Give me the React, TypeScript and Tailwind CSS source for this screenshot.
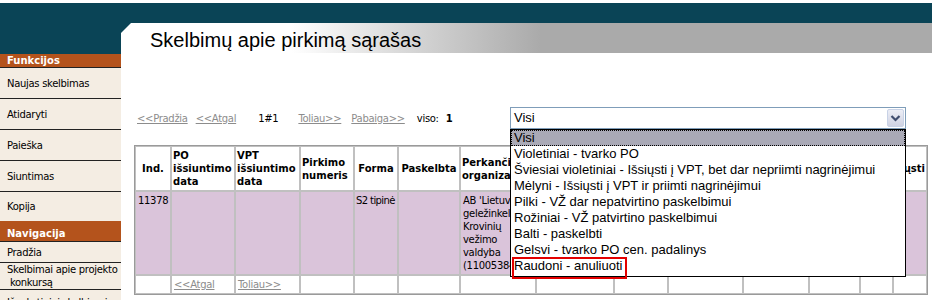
import React from "react";

function Sidebar() {
  const item = "h-[31px] border-b border-[#222] pl-[7px] flex items-center";
  return (
    <aside className="w-[121px] shrink-0 bg-[#f4ede3]">
      <div className="h-[31px] bg-[#0a4456]" />
      <div className="h-[14px] bg-[#b4531c] border-b border-[#222] pl-[7px] text-white font-bold leading-[13px] tracking-normal">
        Funkcijos
      </div>
      {["Naujas skelbimas", "Atidaryti", "Paieška", "Siuntimas"].map((t) => (
        <div key={t} className={item}>
          {t}
        </div>
      ))}
      <div className="h-[29px] pl-[7px] flex items-center">Kopija</div>
      <div className="h-[21px] bg-[#b4531c] border-b border-[#222] pl-[7px] pt-[6px] text-white font-bold leading-[13px] tracking-normal">
        Navigacija
      </div>
      <div className="h-[21px] border-b border-[#222] pl-[7px] flex items-center">Pradžia</div>
      <div className="h-[27px] border-b border-[#222] pl-[7px] flex items-center leading-[13px]">
        <span>
          Skelbimai apie projekto
          <br />
          {"\u00a0konkursą"}
        </span>
      </div>
      <div className="h-[27px] pl-[7px] pt-[6px] leading-[13px]">Išankstiniai skelbimai</div>
    </aside>
  );
}

const options = [
  "Visi",
  "Violetiniai - tvarko PO",
  "Šviesiai violetiniai - Išsiųsti į VPT, bet dar nepriimti nagrinėjimui",
  "Mėlyni - Išsiųsti į VPT ir priimti nagrinėjimui",
  "Pilki - VŽ dar nepatvirtino paskelbimui",
  "Rožiniai - VŽ patvirtino paskelbimui",
  "Balti - paskelbti",
  "Gelsvi - tvarko PO cen. padalinys",
  "Raudoni - anuliuoti",
];

function Select() {
  return (
    <div className="relative z-10 w-[396px] h-[22px]">
      <div className="w-full h-full border border-[#7f9db9] bg-white flex items-center justify-between pl-[3px] pr-[1px] font-['Liberation_Sans',sans-serif] text-[13px] tracking-normal">
        <span>Visi</span>
        <div className="w-[17px] h-[18px] rounded-[2px] border border-[#c8d2e6] bg-[linear-gradient(to_bottom,#eceef6,#cfd2e2)] flex items-center justify-center">
          <svg width="11" height="8" viewBox="0 0 11 8">
            <path d="M1.5 2 L5.5 6 L9.5 2" fill="none" stroke="#3f4d6e" strokeWidth="2.2" />
          </svg>
        </div>
      </div>
      <div className="absolute left-0 top-[22px] w-[396px] border border-black bg-white pb-[2px] font-['Liberation_Sans',sans-serif] text-[13px] tracking-normal">
        {options.map((o, i) => (
          <div
            key={o}
            className={
              "h-[16px] leading-[16px] pl-[3px] whitespace-nowrap " +
              (i === 0 ? "bg-[#a9a9b6] outline outline-1 outline-dotted outline-black -outline-offset-1" : "")
            }
          >
            {o}
          </div>
        ))}
        <div className="absolute left-[1px] top-[127px] w-[115px] h-[22px] border-2 border-[#e30000]" />
      </div>
    </div>
  );
}

const link = "text-[#8c8c8c] underline";

function Table() {
  const head =
    "border border-[#c0c0c0] bg-white flex items-center px-[1px] py-[2px] overflow-hidden font-bold tracking-normal leading-[13px] whitespace-nowrap";
  const data =
    "border border-[#c0c0c0] bg-[#dac4da] px-[2px] py-[2px] overflow-hidden leading-[13px] whitespace-nowrap";
  const foot = "border border-[#c0c0c0] bg-white px-[2px] py-[2px] overflow-hidden leading-[13px] whitespace-nowrap";
  return (
    <div className="mt-[16px] w-[794px] border border-[#9a9a9a]">
      <div className="grid grid-cols-[36px_64px_65px_54px_44px_62px_76px_78px_54px_75px_66px_51px_33px_34px]">
        <div className={head + " justify-center"}>Ind.</div>
        <div className={head}>
          <span>
            PO
            <br />
            išsiuntimo
            <br />
            data
          </span>
        </div>
        <div className={head}>
          <span>
            VPT
            <br />
            išsiuntimo
            <br />
            data
          </span>
        </div>
        <div className={head}>
          <span>
            Pirkimo
            <br />
            numeris
          </span>
        </div>
        <div className={head + " justify-center"}>Forma</div>
        <div className={head + " justify-center"}>Paskelbta</div>
        <div className={head}>
          <span>
            Perkančioji
            <br />
            organizacija
          </span>
        </div>
        {Array.from({ length: 6 }).map((_, i) => (
          <div key={i} className={head} />
        ))}
        <div className={head + " justify-end"}>
          <span className="shrink-0">Išsiųsti</span>
        </div>

        <div className={data}>11378</div>
        <div className={data} />
        <div className={data} />
        <div className={data} />
        <div className={data + " !px-[1px] tracking-[-0.6px]"}>S2 tipinė</div>
        <div className={data} />
        <div className={data}>
          AB 'Lietuvos
          <br />
          geležinkeliai'
          <br />
          Krovinių
          <br />
          vežimo
          <br />
          valdyba
          <br />
          (110053842)
        </div>
        {Array.from({ length: 7 }).map((_, i) => (
          <div key={i} className={data} />
        ))}

        <div className={foot} />
        <div className={foot}>
          <span className={link}>&lt;&lt;Atgal</span>
        </div>
        <div className={foot}>
          <span className={link}>Toliau&gt;&gt;</span>
        </div>
        {Array.from({ length: 11 }).map((_, i) => (
          <div key={i} className={foot} />
        ))}
      </div>
    </div>
  );
}

function Main() {
  return (
    <main className="flex-1 min-w-0">
      <div className="bg-[#0a4456]">
        <div className="h-[30px] [clip-path:polygon(10px_0,100%_0,100%_100%,0_100%,0_10px)] bg-[linear-gradient(to_right,#ffffff_170px,#aaaaaa_420px)] pl-[29px] font-['Liberation_Sans',sans-serif] text-[20px] leading-[34px] tracking-normal whitespace-nowrap">
          Skelbimų apie pirkimą sąrašas
        </div>
      </div>
      <div className="pl-[13px]">
        <div className="mt-[54px] h-[22px] w-[772px] flex items-center">
          <span className={link + " ml-[3px]"}>&lt;&lt;Pradžia</span>
          <span className={link + " ml-[8px]"}>&lt;&lt;Atgal</span>
          <span className="ml-[22px]">1#1</span>
          <span className={link + " ml-[20px]"}>Toliau&gt;&gt;</span>
          <span className={link + " ml-[10px]"}>Pabaiga&gt;&gt;</span>
          <span className="ml-[12px]">viso:</span>
          <span className="ml-[7px] font-bold">1</span>
          <div className="ml-auto">
            <Select />
          </div>
        </div>
        <Table />
      </div>
    </main>
  );
}

export default function App() {
  return (
    <div className="w-[932px] h-[300px] overflow-hidden bg-white font-['DejaVu_Sans',sans-serif] text-[10px] tracking-[-0.3px] text-black">
      <div className="h-[3px] bg-white" />
      <div className="h-[20px] bg-[#0a4456]" />
      <div className="flex">
        <Sidebar />
        <Main />
      </div>
    </div>
  );
}
